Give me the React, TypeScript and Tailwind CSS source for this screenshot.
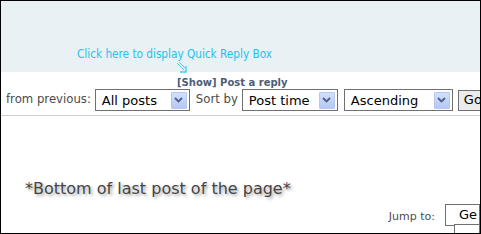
import React from "react";

function Select({ label, width }: { label: string; width: string }) {
  return (
    <div className={`flex h-[22px] shrink-0 items-center justify-between border border-[#707070] bg-white pl-[6px] pr-[2px] ${width}`}>
      <span className="text-[13px] leading-none text-black">{label}</span>
      <span className="flex h-[17px] w-[16px] items-center justify-center rounded-[1px] border border-[#b5c7f0] bg-gradient-to-b from-[#d3e0fd] to-[#b4c8f6]">
        <svg width="9" height="6" viewBox="0 0 9 6">
          <path d="M1 1 L4.5 4.5 L8 1" fill="none" stroke="#4d6185" strokeWidth="1.8" />
        </svg>
      </span>
    </div>
  );
}

export default function App() {
  return (
    <div className="relative h-[234px] w-[481px] overflow-hidden border border-black bg-white font-['DejaVu_Sans',sans-serif]">
      <div className="relative h-[71px] bg-[#e9f1f4] pl-[76px] pt-[40px]">
        <span className="whitespace-nowrap font-['DejaVu_Sans_Condensed','DejaVu_Sans',sans-serif] text-[11.7px] text-[#22c3ee]">Click here to display Quick Reply Box</span>
        <svg className="absolute left-[175px] top-[61px]" width="12" height="12" viewBox="0 0 12 12">
          <path d="M1 1 L8 8 M3 0 L9 6" fill="none" stroke="#3cd0f5" strokeWidth="1" />
          <path d="M10 4 L10 10 L4 10" fill="none" stroke="#3cd0f5" strokeWidth="1.3" />
        </svg>
      </div>
      <div className="pl-[176px] pt-[4px] text-[10px] font-bold leading-[13px] text-[#4c5d77] whitespace-nowrap">
        [Show] Post a reply
      </div>
      <div className="flex items-center whitespace-nowrap pl-[5px] text-[11.7px] text-[#4b4b4b]">
        <span className="mr-[4px]">from previous:</span>
        <Select label="All posts" width="w-[95px]" />
        <span className="ml-[6px] mr-[4px]">Sort by</span>
        <Select label="Post time" width="w-[96px]" />
        <div className="w-[6px] shrink-0" />
        <Select label="Ascending" width="w-[109px]" />
        <div className="w-[5px] shrink-0" />
        <div className="flex h-[21px] w-[40px] shrink-0 items-center border border-[#707070] bg-[#ebebeb] pl-[5px] text-[13px] text-black">Go</div>
      </div>
      <div className="mt-[4px] h-px bg-[#cfcfcf]" />
      <div className="pl-[24px] pt-[63px] text-[16px] leading-[20px] text-[#444] whitespace-nowrap [text-shadow:2px_2px_3px_#aaa]">
        *Bottom of last post of the page*
      </div>
      <div className="flex items-start justify-end whitespace-nowrap pt-[5px]">
        <span className="mr-[10px] mt-[5px] text-[11px] text-[#4b4b4b]">Jump to:</span>
        <div className="flex flex-col items-end">
          <div className="flex h-[22px] w-[35px] items-center border border-[#707070] bg-white pl-[13px] text-[13px] text-black">Ge</div>
          <div className="mt-[-2px] h-[10px] w-[26px] border border-[#707070] bg-white" />
        </div>
      </div>
    </div>
  );
}
